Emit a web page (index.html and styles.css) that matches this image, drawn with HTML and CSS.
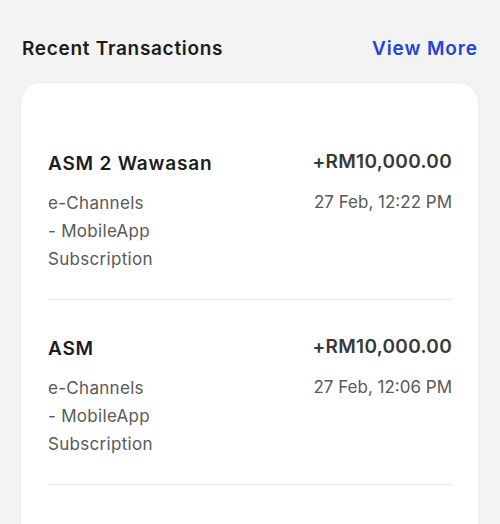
FILE: index.html
```html
<!DOCTYPE html>
<html lang="en">
<head>
    <meta charset="UTF-8">
    <meta name="viewport" content="width=device-width, initial-scale=1.0">
    <title>Recent Transactions</title>
    <link rel="stylesheet" href="styles.css">
</head>
<body>
<div class="section-header">
    <h2>Recent Transactions</h2>
    <a href="#" class="view-more">View More</a>
</div>

<div class="card">
    <div class="txn">
        <div class="txn-left">
            <div class="txn-title">ASM 2 Wawasan</div>
            <div class="txn-desc">e-Channels<br>- MobileApp<br>Subscription</div>
        </div>
        <div class="txn-right">
            <div class="txn-amount">+RM10,000.00</div>
            <div class="txn-date">27 Feb, 12:22 PM</div>
        </div>
    </div>
    <div class="txn">
        <div class="txn-left">
            <div class="txn-title">ASM</div>
            <div class="txn-desc">e-Channels<br>- MobileApp<br>Subscription</div>
        </div>
        <div class="txn-right">
            <div class="txn-amount">+RM10,000.00</div>
            <div class="txn-date">27 Feb, 12:06 PM</div>
        </div>
    </div>
    <div class="txn">
        <div class="txn-left">
            <div class="txn-title">ASM</div>
            <div class="txn-desc">e-Channels<br>- MobileApp<br>Subscription</div>
        </div>
        <div class="txn-right">
            <div class="txn-amount">+RM10,000.00</div>
            <div class="txn-date">27 Feb, 11:58 AM</div>
        </div>
    </div>
</div>
</body>
</html>
```

FILE: styles.css
```css
body {
    margin: 0;
    font-family: Inter, "Noto Sans", sans-serif;
    background-color: #f3f3f3;
    overflow: hidden;
}

.section-header {
    display: flex;
    justify-content: space-between;
    align-items: center;
    padding: 36px 22px 0 22px;
    height: 24px;
}

.section-header h2 {
    margin: 0;
    font-size: 19px;
    font-weight: 600;
    letter-spacing: 0.7px;
    color: #1c1c1c;
}

.view-more {
    font-size: 19px;
    font-weight: 600;
    letter-spacing: 0.9px;
    color: #2543d6;
    text-decoration: none;
}

.card {
    margin: 23px 22px 0 21px;
    padding: 32px 26px 0 27px;
    background: white;
    border-radius: 20px;
    box-shadow: 0 0 2px rgba(0, 0, 0, 0.08);
}

.txn {
    display: flex;
    justify-content: space-between;
    padding: 35px 0 26px 0;
    border-bottom: 1px solid #e8e8e8;
}

.txn-title {
    font-size: 19px;
    font-weight: 600;
    line-height: 28px;
    letter-spacing: 0.8px;
    color: #1c1c1c;
}

.txn-desc,
.txn-date {
    margin-top: 11px;
    font-size: 17px;
    line-height: 28px;
    letter-spacing: 0.3px;
    color: #595959;
}

.txn-date {
    letter-spacing: 0;
    margin-top: 13px;
}

.txn-right {
    margin-top: -1px;
    text-align: right;
}

.txn-amount {
    font-size: 19px;
    font-weight: 600;
    line-height: 26px;
    letter-spacing: 0.3px;
    color: #383838;
}
```
